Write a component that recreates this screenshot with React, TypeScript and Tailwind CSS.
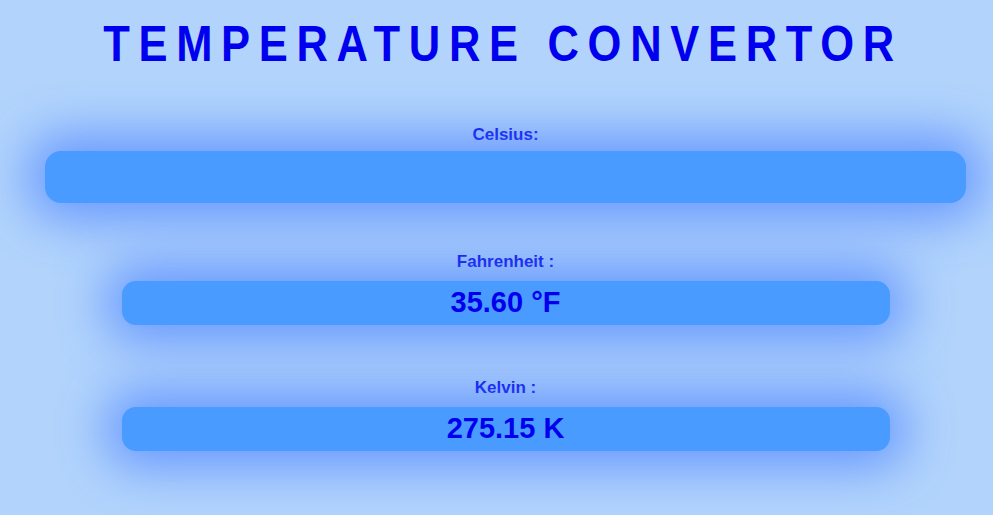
export default function App() {
  return (
    <div className="min-h-[515px] w-full bg-[#b2d4fc] flex flex-col items-center overflow-hidden pl-[18px]" style={{ fontFamily: '"Liberation Sans", Arial, sans-serif' }}>
      <h1
        className="mt-[16px] pr-[6px] whitespace-nowrap text-[50px] leading-[56px] font-bold text-[#0000ee] tracking-[0.2em] scale-x-[0.87]"
      >
        TEMPERATURE CONVERTOR
      </h1>
      <div className="mt-[53px] w-full flex flex-col items-center">
        <label className="text-[17px] font-bold text-[#0c0cee] leading-[20px]">Celsius:</label>
        <div className="mt-[6px] w-[921px] h-[52px] rounded-[16px] bg-[#4a9bff] shadow-[0_0_50px_16px_rgba(70,125,255,0.7)]" />
      </div>
      <div className="mt-[49px] w-full flex flex-col items-center">
        <label className="text-[17px] font-bold text-[#0c0cee] leading-[20px]">Fahrenheit :</label>
        <div className="mt-[9px] w-[768px] h-[44px] rounded-[14px] bg-[#4a9bff] shadow-[0_0_50px_16px_rgba(70,125,255,0.7)] flex items-center justify-center">
          <span className="text-[29px] font-bold text-[#0000ee]">35.60 °F</span>
        </div>
      </div>
      <div className="mt-[53px] w-full flex flex-col items-center">
        <label className="text-[17px] font-bold text-[#0c0cee] leading-[20px]">Kelvin :</label>
        <div className="mt-[9px] w-[768px] h-[44px] rounded-[14px] bg-[#4a9bff] shadow-[0_0_50px_16px_rgba(70,125,255,0.7)] flex items-center justify-center">
          <span className="text-[29px] font-bold text-[#0000ee]">275.15 K</span>
        </div>
      </div>
    </div>
  );
}
